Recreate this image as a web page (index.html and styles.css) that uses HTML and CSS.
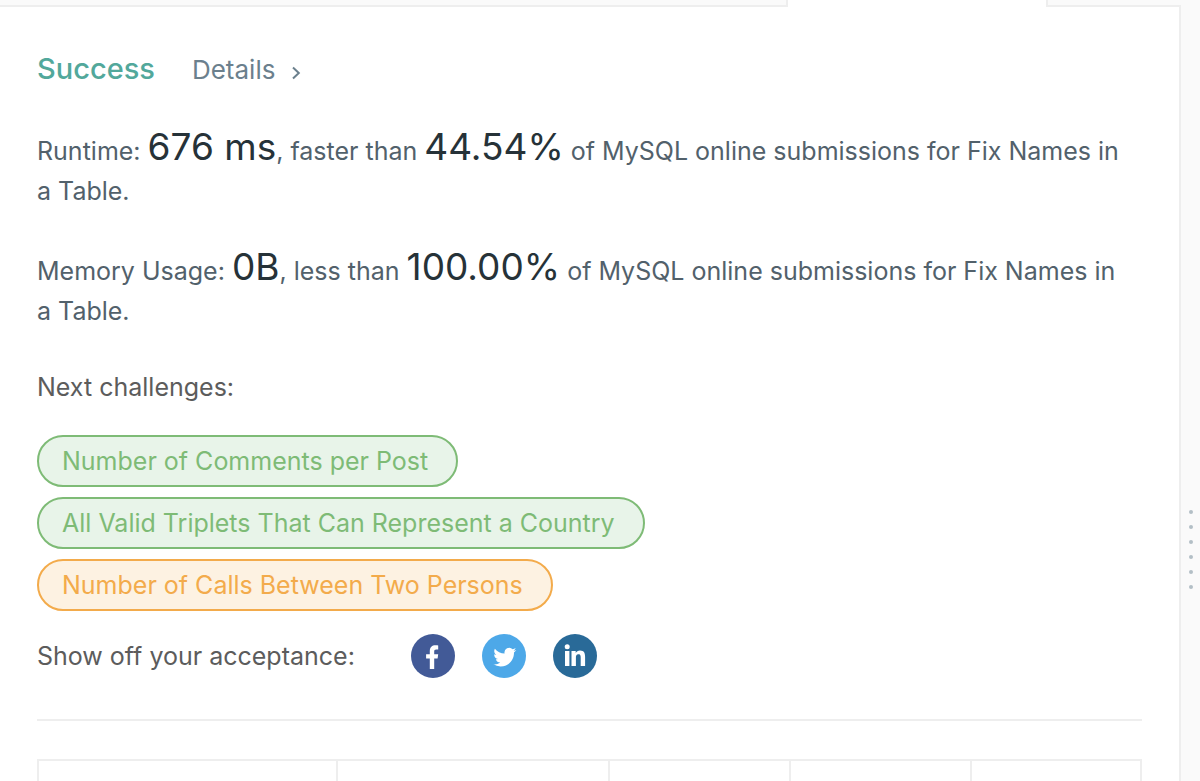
FILE: index.html
```html
<!DOCTYPE html>
<html lang="en">
<head>
<meta charset="utf-8">
<meta name="viewport" content="width=device-width, initial-scale=1">
<title>Submission result</title>
<link rel="stylesheet" href="styles.css">
</head>
<body>
<div class="workspace">
  <div class="panel">
    <div class="tabs">
      <div class="tab tab-before"></div>
      <div class="tab-active"></div>
      <div class="tab tab-after"></div>
    </div>
    <main class="result">
      <header class="status">
        <h1 class="status-title">Success</h1>
        <a class="details" href="#details">Details
          <svg class="chevron" viewBox="0 0 10 14" aria-hidden="true"><path d="M2 1.500L7.800 7 2 12.500"/></svg>
        </a>
      </header>
      <div class="metrics">
        <p class="metric">Runtime: <span class="figure">676 ms</span>, faster than <span class="figure">44.54%</span> of MySQL online submissions for Fix Names in a Table.</p>
        <p class="metric">Memory Usage: <span class="figure">0B</span>, less than <span class="figure">100.00%</span> of MySQL online submissions for Fix Names in a Table.</p>
      </div>
      <h2 class="next-title">Next challenges:</h2>
      <nav class="challenges">
        <a class="challenge easy" href="#comments">Number of Comments per Post</a>
        <a class="challenge easy" href="#triplets">All Valid Triplets That Can Represent a Country</a>
        <a class="challenge medium" href="#calls">Number of Calls Between Two Persons</a>
      </nav>
      <div class="share">
        <span class="share-label">Show off your acceptance:</span>
        <a class="social facebook" href="#facebook" aria-label="Facebook">
          <svg viewBox="0 0 44 44" aria-hidden="true"><path d="M18.800 35V24.400h-3.700v-4.200h3.700v-3.100c0-3.900 2.300-5.900 5.700-5.900 1.300 0 2.200.1 2.700.2v4h-1.900c-1.700 0-2.100.8-2.100 2.100v2.700h4l-.6 4.200h-3.400V35z"/></svg>
        </a>
        <a class="social twitter" href="#twitter" aria-label="Twitter">
          <svg viewBox="0 0 44 44" aria-hidden="true"><path transform="translate(11.300 11.600) scale(.96)" d="M23.950 4.570a10 10 0 0 1-2.820.770 4.960 4.960 0 0 0 2.160-2.720c-.950.550-2 .950-3.130 1.180a4.920 4.920 0 0 0-8.380 4.480C7.690 8.090 4.070 6.130 1.640 3.160a4.820 4.820 0 0 0-.670 2.480c0 1.710.870 3.210 2.190 4.100a4.900 4.900 0 0 1-2.230-.620v.060a4.920 4.920 0 0 0 3.950 4.830 5 5 0 0 1-2.210.080 4.940 4.940 0 0 0 4.600 3.420A9.870 9.870 0 0 1 0 19.540a13.990 13.990 0 0 0 7.550 2.210c9.050 0 14-7.500 14-13.980 0-.210 0-.420-.020-.630a9.940 9.940 0 0 0 2.460-2.550z"/></svg>
        </a>
        <a class="social linkedin" href="#linkedin" aria-label="LinkedIn">
          <svg viewBox="0 0 44 44" aria-hidden="true"><circle cx="14.200" cy="12.800" r="2.500"/><path d="M12 17h4.400v15H12zM18.500 17h4.200v2c.8-1.400 2.300-2.400 4.300-2.400 4.200 0 5.100 2.800 5.100 6.400v9h-4.400v-8c0-1.900 0-3.800-2.300-3.800s-2.500 1.800-2.500 3.700V32h-4.400z"/></svg>
        </a>
      </div>
      <hr class="rule">
      <table class="submissions">
        <colgroup><col class="c-time"><col class="c-status"><col class="c-figure"><col class="c-figure"><col class="c-lang"></colgroup>
        <tbody><tr><td></td><td></td><td></td><td></td><td></td></tr></tbody>
      </table>
    </main>
  </div>
  <div class="splitter"><i class="dot"></i><i class="dot"></i><i class="dot"></i><i class="dot"></i><i class="dot"></i><i class="dot"></i></div>
</div>
</body>
</html>
```
FILE: styles.css
```css
* { box-sizing: border-box; }

body {
  margin: 0;
  background: #fff;
  color: #546069;
  font-family: Inter, "Liberation Sans", sans-serif;
  font-size: 25px;
  line-height: 40px;
}

a { text-decoration: none; }

.workspace {
  display: flex;
  height: 100vh;
  overflow: hidden;
}

.panel { flex: 1; min-width: 0; }

.tabs { display: flex; height: 7px; }
.tab { border-bottom: 2px solid #eee; background: #fafafa; }
.tab-before { flex: 790; border-right: 2px solid #eee; }
.tab-active { flex: 259; }
.tab-after { flex: 134; border-left: 2px solid #eee; }

.result {
  padding: 42px 37px 0;
  border-right: 2px solid #eee;
  min-height: 100vh;
}

.status { display: flex; align-items: baseline; gap: 37px; }
.status-title {
  margin: 0;
  color: #52a89b;
  font-size: 29px;
  font-weight: 500;
}
.details { color: #6b808d; font-size: 26px; }
.chevron {
  width: 10px;
  height: 14px;
  margin-left: 8px;
  vertical-align: -1px;
  fill: none;
  stroke: #6b808d;
  stroke-width: 2;
}

.metrics {
  display: flex;
  flex-direction: column;
  gap: 40px;
  margin-top: 41px;
  padding-right: 8px;
}
.metric { margin: 0; color: #52616b; }
.figure { color: #263238; font-size: 37px; line-height: 30px; }

.next-title {
  margin: 36px 0 28px;
  color: #5c5c5c;
  font-size: 25px;
  font-weight: 400;
}

.challenges {
  display: flex;
  flex-direction: column;
  align-items: flex-start;
  gap: 10px;
}
.challenge {
  padding: 4px 28px 4px 23px;
  border: 2px solid;
  border-radius: 26px;
}
.easy { color: #7ebb76; background: #e8f4e9; }
.medium { color: #f3ab4b; background: #fdf2e2; }

.share {
  display: flex;
  align-items: center;
  gap: 27px;
  margin-top: 23px;
}
.share-label { margin-right: 29px; color: #5c5c5c; }
.social { width: 44px; height: 44px; border-radius: 50%; }
.social svg { display: block; fill: #fff; }
.facebook { background: #425a97; }
.twitter { background: #4da8e8; }
.linkedin { background: #296a98; }

.rule {
  margin: 41px 0 38px;
  border: 0;
  border-top: 2px solid #eee;
}

.submissions {
  width: 100%;
  border-collapse: collapse;
  table-layout: fixed;
}
.submissions td { height: 80px; border: 2px solid #eee; }
.c-time { width: 27.1%; }
.c-status { width: 24.7%; }
.c-figure { width: 16.4%; }

.splitter {
  display: flex;
  flex-direction: column;
  align-items: center;
  gap: 11px;
  width: 19px;
  padding-top: 510px;
  background: #fafafa;
}
.dot { width: 4px; height: 4px; border-radius: 50%; background: #b3bfc6; }
```
